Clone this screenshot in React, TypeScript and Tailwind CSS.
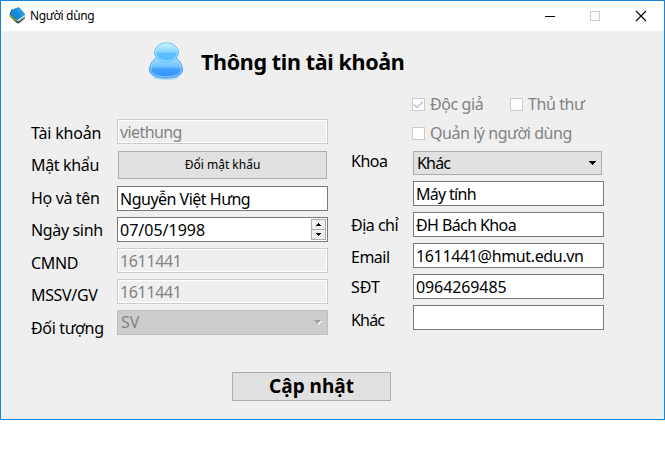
import type { ReactNode } from 'react';

function BookIcon() {
  return (
    <svg width="18" height="18" viewBox="0 0 18 18" className="block">
      <path d="M1 7.500 8.600 14l7.400-5v2.300L9.500 16.600 7.500 15.800 1.200 10z" fill="#17384a" />
      <path d="M8.500 13.200 15.700 7.800v2.600L9 15z" fill="#e8f1f4" />
      <path d="M10 13.200v1.200M12 11.800v1.200M14 10.200v1.400" stroke="#17384a" strokeWidth=".8" />
      <path d="M.6 7.200 7.800 13v2L.6 9.500z" fill="#8aa51f" />
      <path d="M3.200 2.500 9.800.2 16.200 7.500 8.600 13 1 7z" fill="#168bd8" />
      <path d="M9.800.2 16.200 7.500 12.600 10 6 1.500z" fill="#2798e2" />
      <path d="M3.200 2.500 1 7l7.600 6" fill="none" stroke="#0c5d9c" strokeWidth="1" />
    </svg>
  );
}

function UserIcon() {
  return (
    <svg width="36" height="40" viewBox="0 0 36 40" className="block">
      <defs>
        <linearGradient id="head" x1="0" y1="0" x2="0" y2="1">
          <stop offset="0" stopColor="#d3f4ff" />
          <stop offset=".45" stopColor="#86d5ff" />
          <stop offset=".55" stopColor="#5cc0ff" />
          <stop offset="1" stopColor="#52baff" />
        </linearGradient>
        <linearGradient id="body" x1="0" y1="0" x2="0" y2="1">
          <stop offset="0" stopColor="#a5e0ff" />
          <stop offset=".45" stopColor="#6cc2ff" />
          <stop offset=".55" stopColor="#45a3ff" />
          <stop offset="1" stopColor="#318efb" />
        </linearGradient>
      </defs>
      <ellipse cx="18" cy="36.500" rx="13" ry="2.500" fill="#b8dcf5" />
      <path d="M9 16.500C4 19 1.500 24.500 1.500 29c0 5 7 8 16.500 8s16.500-3 16.500-8c0-4.500-2.500-10-7.500-12.500z" fill="url(#body)" stroke="#4fa4ec" />
      <path d="M9 18C5 20 2.800 25 2.800 29c0 4 6.200 6.800 15.200 6.800S33.200 33 33.200 29c0-4-2.200-9-6.200-11" fill="none" stroke="#a9deff" strokeWidth=".8" />
      <ellipse cx="18.500" cy="11.500" rx="12" ry="9.700" fill="url(#head)" stroke="#64bdf1" />
      <ellipse cx="18.500" cy="11.500" rx="11" ry="8.700" fill="none" stroke="#b9ebff" strokeWidth=".8" />
    </svg>
  );
}

function Label({ className, children }: { className: string; children: ReactNode }) {
  return <div className={`h-5 whitespace-nowrap leading-5 ${className}`}>{children}</div>;
}

function Field({ className = '', children, disabled = false }: { className?: string; children?: ReactNode; disabled?: boolean }) {
  const look = disabled ? 'border-[#cccccc] text-[#838383] shadow-[inset_0_0_0_1px_#ffffff]' : 'border-[#7a7a7a] bg-white';
  return <div className={`h-[25px] w-full whitespace-nowrap border pl-[2px] leading-[24px] ${look} ${className}`}>{children}</div>;
}

function Check({ label, checked = false, className = '' }: { label: string; checked?: boolean; className?: string }) {
  return (
    <div className={`flex h-5 items-center gap-[5px] whitespace-nowrap leading-5 text-[#838383] ${className}`}>
      <span className="block size-[13px] shrink-0 border border-[#cccccc] bg-white">
        {checked && (
          <svg width="11" height="11" viewBox="0 0 11 11" className="block">
            <path d="M1 5.500 4 8.500 10 2.500" fill="none" stroke="#bfbfbf" strokeWidth="1.300" />
          </svg>
        )}
      </span>
      <span>{label}</span>
    </div>
  );
}

function Spin({ up = false }: { up?: boolean }) {
  return (
    <span className={`flex w-[15px] items-center justify-center border border-[#acacac] bg-[#f0f0f0] ${up ? 'h-[11px]' : '-mt-px h-[11px]'}`}>
      <svg width="5" height="3" viewBox="0 0 5 3" shapeRendering="crispEdges">
        <path d={up ? 'M2 0h1v1h1v1h1v1H0V2h1V1h1z' : 'M0 0h5v1H4v1H3v1H2V2H1V1H0z'} fill="#000" />
      </svg>
    </span>
  );
}

export default function App() {
  return (
    <div className="h-[466px] w-[665px] bg-white font-['Noto_Sans',sans-serif] text-[16px] text-black">
      <div className="flex h-[420px] w-full flex-col border border-[#1883d7] bg-[#efefef]">
        <header className="flex h-[30px] shrink-0 items-center bg-white pl-2">
          <BookIcon />
          <span className="ml-[3px] text-[12px] leading-4 tracking-[-0.35px]">Người dùng</span>
          <svg className="ml-auto mr-[16px]" width="104" height="12" viewBox="0 0 104 12" shapeRendering="crispEdges">
            <path d="M1 6.500h10" stroke="#000" />
            <rect x="46.500" y="1.500" width="9" height="9" fill="none" stroke="#cccccc" />
            <path d="M92 1l10 10M102 1l-10 10" stroke="#000" strokeWidth="1.100" shapeRendering="auto" />
          </svg>
        </header>
        <div className="flex h-[60px] shrink-0 pl-[147px] pt-[10px]">
          <UserIcon />
          <h1 className="ml-[17px] mt-[7px] whitespace-nowrap text-[21.5px] font-bold leading-7 tracking-[-0.35px]">Thông tin tài khoản</h1>
        </div>
        <main className="flex h-[250px] shrink-0">
          <div className="flex w-[116px] shrink-0 flex-col pl-[30px] pt-8 tracking-[-0.35px]">
            <Label className="tracking-[-0.2px]">Tài khoản</Label>
            <Label className="mt-3">Mật khẩu</Label>
            <Label className="mt-[13px]">Họ và tên</Label>
            <Label className="mt-3">Ngày sinh</Label>
            <Label className="mt-[13px]">CMND</Label>
            <Label className="mt-3">MSSV/GV</Label>
            <Label className="mt-[13px]">Đối tượng</Label>
          </div>
          <div className="flex w-[211px] shrink-0 flex-col pt-7">
            <Field disabled className="tracking-[-0.6px]">viethung</Field>
            <button className="mx-px mt-[7px] h-7 border border-[#adadad] bg-[#e1e1e1] text-[12px]">Đổi mật khẩu</button>
            <Field className="mt-[7px] tracking-[-0.5px]">Nguyễn Việt Hưng</Field>
            <Field className="mt-[6px] flex justify-between">
              <span>07/05/1998</span>
              <span className="mr-px mt-px flex flex-col">
                <Spin up />
                <Spin />
              </span>
            </Field>
            <Field disabled className="mt-[6px] tracking-[-0.35px]">1611441</Field>
            <Field disabled className="mt-[6px] tracking-[-0.35px]">1611441</Field>
            <div className="mt-[6px] flex h-[25px] items-center justify-between border border-[#bfbfbf] bg-[#cccccc] pl-[3px] pr-[5px] text-[#838383]">
              <span className="-mt-px">SV</span>
              <svg width="8" height="5" viewBox="0 0 8 5">
                <path d="M1 1h7L4.500 5z" fill="#fff" />
                <path d="M0 0h7L3.500 4z" fill="#9b9b9b" />
              </svg>
            </div>
          </div>
          <div className="ml-[23px] flex w-[61px] shrink-0 flex-col pt-[60px] tracking-[-0.5px]">
            <Label className="">Khoa</Label>
            <Label className="mt-[44px]">Địa chỉ</Label>
            <Label className="mt-3">Email</Label>
            <Label className="mt-[10px] tracking-normal">SĐT</Label>
            <Label className="mt-[13px] tracking-[-0.8px]">Khác</Label>
          </div>
          <div className="ml-px flex w-[191px] shrink-0 flex-col pt-[3px]">
            <div className="-ml-px flex tracking-[-0.4px]">
              <Check label="Độc giả" checked className="w-[98px]" />
              <Check label="Thủ thư" />
            </div>
            <Check label="Quản lý người dùng" className="-ml-px mt-[9px] tracking-[-0.45px]" />
            <div className="mr-[2px] mt-[8px] flex h-6 items-center justify-between border border-[#adadad] bg-[#e1e1e1] pl-[3px] pr-[5px]">
              <span className="tracking-[-0.8px]">Khác</span>
              <svg width="7" height="4" viewBox="0 0 7 4" shapeRendering="crispEdges">
                <path d="M0 0h7v1H6v1H5v1H4v1H3V3H2V2H1V1H0z" />
              </svg>
            </div>
            <Field className="mt-[6px] tracking-[-0.7px]">Máy tính</Field>
            <Field className="mt-[6px] tracking-[-0.6px]">ĐH Bách Khoa</Field>
            <Field className="mt-[6px] tracking-[-0.35px]">1611441@hmut.edu.vn</Field>
            <Field className="mt-[6px] tracking-[-0.1px]">0964269485</Field>
            <Field className="mt-[6px]" />
          </div>
        </main>
        <button className="ml-[231px] mt-[31px] h-[29px] w-[159px] shrink-0 border border-[#adadad] bg-[#e1e1e1] text-[19px] font-bold leading-[27px]">Cập nhật</button>
      </div>
    </div>
  );
}
